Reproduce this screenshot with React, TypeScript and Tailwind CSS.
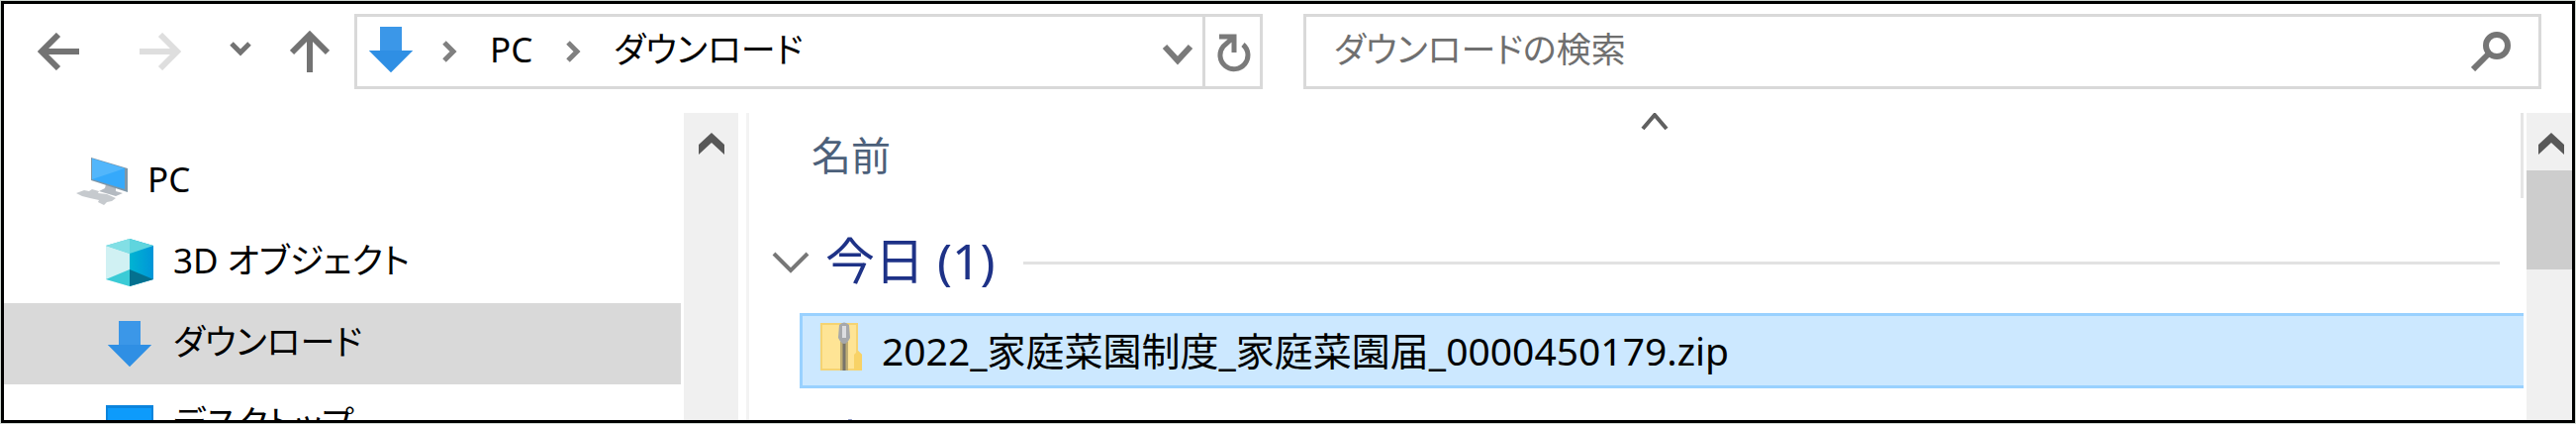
import type { ReactNode } from "react";

type IconProps = { className?: string };

const DownloadIcon = ({ className }: IconProps) => (
  <svg viewBox="0 0 44 46" className={className} aria-hidden="true">
    <path d="M11 0h22v24h11L22 46 0 24h11z" fill="#3b97e8" />
    <path d="M0 24h44L22 46z" fill="#2f8fe4" />
  </svg>
);

const ComputerIcon = ({ className }: IconProps) => (
  <svg viewBox="0 0 52 48" className={className} aria-hidden="true">
    <path d="M30 27l10 3v4l7 2-7 3-17-5 6-3z" fill="#b4bac1" />
    <path
      d="M0 36l8-3 5 1 3-2 7 2-1 2 9 1 9 4-4 3-5 1-3 3-6-3 1-2-9-2-8-2z"
      fill="#c6cace"
    />
    <path d="M15 0l37 11v24L15 23z" fill="#7f97a8" />
    <path d="M16 1l33 10v21L16 22z" fill="#35a9fb" />
    <path d="M16 1l33 10-33 11z" fill="#52b6fb" />
  </svg>
);

const CubeIcon = ({ className }: IconProps) => (
  <svg viewBox="0 0 48 48" className={className} aria-hidden="true">
    <defs>
      <linearGradient id="cube-right">
        <stop offset="0" stopColor="#00b4d2" />
        <stop offset="1" stopColor="#0095d8" />
      </linearGradient>
    </defs>
    <path d="M0 7L24 0v48L0 41z" fill="#d0f1f3" />
    <path d="M24 0l24 7v34l-24 7z" fill="url(#cube-right)" />
    <path d="M0 7l24-7 24 7-24 8z" fill="#5fd5de" />
    <path d="M0 7l24-7v15z" fill="#82dfe5" />
    <path d="M0 41l24-10v17z" fill="#3bcbd6" />
    <path d="M24 31l24 10-24 7z" fill="#04708f" />
  </svg>
);

const DesktopIcon = ({ className }: IconProps) => (
  <svg viewBox="0 0 48 40" className={className} aria-hidden="true">
    <path d="M0 0h48v34H0z" fill="#0b84dc" />
    <path d="M2 3h44v29H2z" fill="#0d9bfb" />
  </svg>
);

const ZipIcon = ({ className }: IconProps) => (
  <svg viewBox="0 0 42 50" className={className} aria-hidden="true">
    <path d="M0 1h38v28l4 4v16H0z" fill="#f5d372" />
    <path d="M2 3h34v44H2z" fill="#fee495" />
    <path d="M34 33l4-4 4 4v16h-8z" fill="#f8d266" />
    <path d="M20 20h8v29h-8z" fill="#c0ae74" />
    <path d="M24 20v29" stroke="#77746a" strokeWidth="3" />
    <path d="M19 3q5-5 10 0l1 13q-6 12-12 0z" fill="#a6a8ab" />
    <path d="M22 4h4v12h-4z" fill="#dcdde0" />
  </svg>
);

type StrokeProps = {
  d: string;
  viewBox: string;
  className: string;
  width: number;
};

const Stroke = ({ d, viewBox, className, width }: StrokeProps) => (
  <svg
    viewBox={viewBox}
    className={className}
    fill="none"
    stroke="currentColor"
    strokeWidth={width}
    aria-hidden="true"
  >
    <path d={d} />
  </svg>
);

const Crumb = ({ children }: { children: ReactNode }) => (
  <>
    <Stroke
      viewBox="0 0 18 24"
      d="M4 3l9 9-9 9"
      width={5}
      className="h-6 w-[18px] shrink-0 text-[#808080]"
    />
    <button type="button" className="pb-1 whitespace-nowrap">
      {children}
    </button>
  </>
);

const ScrollUp = () => (
  <button
    type="button"
    aria-label="上へスクロール"
    className="flex h-[58px] w-full items-center justify-center pt-1 text-[#585858]"
  >
    <svg viewBox="0 0 26 22" className="h-[22px] w-[26px] shrink-0" fill="currentColor">
      <path d="M13 0l13 12v10L13 10 0 22V12z" />
    </svg>
  </button>
);

const folders = [
  { name: "PC", Icon: ComputerIcon, icon: "h-12 w-[52px]", row: "pl-[73px]" },
  { name: "3D オブジェクト", Icon: CubeIcon, icon: "h-12 w-12", row: "pl-[103px]" },
  {
    name: "ダウンロード",
    Icon: DownloadIcon,
    icon: "h-[46px] w-12",
    row: "pl-[103px] bg-[#d9d9d9]",
  },
  { name: "デスクトップ", Icon: DesktopIcon, icon: "h-10 w-12", row: "pl-[103px]" },
];

const Toolbar = () => (
  <header className="flex h-[110px] shrink-0 items-start pt-[10px] pr-[31px]">
    <nav className="flex h-[76px] w-[354px] shrink-0 items-center pl-[34px] text-[#737373]">
      <button type="button" aria-label="戻る">
        <Stroke
          viewBox="0 0 42 38"
          d="M42 19H3M21 2L4 19l17 17"
          width={6}
          className="h-[38px] w-[42px]"
        />
      </button>
      <button type="button" aria-label="進む" disabled className="ml-[61px] text-[#dedede]">
        <Stroke
          viewBox="0 0 42 38"
          d="M0 19h39M21 2l17 17-17 17"
          width={6}
          className="h-[38px] w-[42px]"
        />
      </button>
      <button type="button" aria-label="最近表示した場所" className="ml-12">
        <Stroke
          viewBox="0 0 24 16"
          d="M3 2l9 9 9-9"
          width={5}
          className="mb-1 h-4 w-6"
        />
      </button>
      <button type="button" aria-label="上へ" className="ml-[38px]">
        <Stroke
          viewBox="0 0 40 42"
          d="M20 42V4M2 22L20 4l18 18"
          width={6}
          className="h-[42px] w-10"
        />
      </button>
    </nav>

    <div className="flex h-[76px] w-[918px] shrink-0 items-center border-3 border-[#d9d9d9]">
      <DownloadIcon className="mb-1 ml-3 mr-7 h-[46px] w-11 shrink-0" />
      <div className="flex items-center gap-8 text-black">
        <Crumb>PC</Crumb>
        <Crumb>ダウンロード</Crumb>
      </div>
      <button type="button" aria-label="以前の場所" className="ml-auto mr-2 text-[#7a7a7a]">
        <Stroke
          viewBox="0 0 34 24"
          d="M4 3l13 14L30 3"
          width={6}
          className="mt-2 h-6 w-[34px]"
        />
      </button>
      <button
        type="button"
        aria-label="最新の情報に更新"
        className="flex h-full w-[58px] items-center justify-center border-l-3 border-[#d9d9d9] text-[#7a7a7a]"
      >
        <Stroke
          viewBox="0 0 36 44"
          d="M28 13A14 14 0 1 1 8 15L18 6M4 5h15v16"
          width={5}
          className="mt-1 h-11 w-9"
        />
      </button>
    </div>

    <label className="ml-[41px] flex h-[76px] min-w-0 flex-1 items-center border-3 border-[#d9d9d9] px-7">
      <input
        type="text"
        aria-label="検索"
        placeholder="ダウンロードの検索"
        className="min-w-0 flex-1 bg-transparent pb-1 placeholder:text-[#6f6f6f] placeholder:opacity-100 focus:outline-none"
      />
      <svg
        viewBox="0 0 40 40"
        className="h-10 w-10 shrink-0 text-[#757575]"
        fill="none"
        stroke="currentColor"
        aria-hidden="true"
      >
        <circle cx="26" cy="14" r="11" strokeWidth="6" />
        <path d="M18 22L2 38" strokeWidth="6" />
      </svg>
    </label>
  </header>
);

const Sidebar = () => (
  <aside className="flex w-[742px] shrink-0">
    <ul className="mr-[3px] min-w-0 flex-1 pt-7">
      {folders.map(({ name, Icon, icon, row }) => (
        <li key={name}>
          <button
            type="button"
            className={`flex h-[82px] w-full items-center gap-5 text-black ${row}`}
          >
            <Icon className={`shrink-0 ${icon}`} />
            <span className="pb-1 whitespace-nowrap">{name}</span>
          </button>
        </li>
      ))}
    </ul>
    <div className="w-[55px] shrink-0 bg-[#f0f0f0]">
      <ScrollUp />
    </div>
  </aside>
);

const Group = ({ title }: { title: string }) => (
  <div className="flex h-[86px] items-center pl-[23px] pr-6">
    <button
      type="button"
      className="flex items-center gap-4 text-[50px]/[60px] whitespace-nowrap text-[#1e3287]"
    >
      <Stroke
        viewBox="0 0 38 22"
        d="M2 2l17 17L36 2"
        width={4}
        className="h-[22px] w-[38px] text-[#777777]"
      />
      <span className="pb-1">{title}</span>
    </button>
    <div className="ml-7 h-[3px] flex-1 bg-[#e2e2e2]" />
  </div>
);

const FileList = () => (
  <main className="ml-2 min-w-0 flex-1 border-l-3 border-[#f3f3f3]">
    <div className="relative flex h-[86px] items-center border-r-3 border-[#e5e5e5] pl-[63px]">
      <button type="button" className="text-[40px]/[48px] text-[#4c607a]">
        名前
      </button>
      <div className="absolute inset-x-0 top-0 flex justify-center pl-10">
        <Stroke
          viewBox="0 0 28 20"
          d="M2 16L14 2l12 14"
          width={4}
          className="h-5 w-7 text-[#606060]"
        />
      </div>
    </div>
    <section className="pt-[22px]">
      <Group title="今日 (1)" />
      <button
        type="button"
        className="mt-2 ml-[51px] flex h-[76px] w-[calc(100%-51px)] items-center gap-5 border-3 border-r-0 border-[#99d1ff] bg-[#cce8ff] pl-[18px] text-[39px]/[48px] whitespace-nowrap text-black"
      >
        <ZipIcon className="mb-2 h-[50px] w-[42px] shrink-0" />
        2022_家庭菜園制度_家庭菜園届_0000450179.zip
      </button>
    </section>
    <section className="pt-[14px]">
      <Group title="先週" />
    </section>
  </main>
);

export default function App() {
  return (
    <div className="bg-[#d0d8d2] p-px font-['Noto_Sans','Noto_Sans_CJK_JP',sans-serif] text-[35px]/[48px] [font-feature-settings:'palt']">
      <div className="flex h-[calc(100vh-2px)] flex-col overflow-hidden border-3 border-black bg-white">
        <Toolbar />
        <div className="flex min-h-0 flex-1 overflow-hidden">
          <Sidebar />
          <FileList />
          <div className="ml-[3px] w-[46px] shrink-0 bg-[#f0f0f0]">
            <div className="pl-1">
              <ScrollUp />
            </div>
            <div className="h-[100px] bg-[#cdcdcd]" />
          </div>
        </div>
      </div>
    </div>
  );
}
